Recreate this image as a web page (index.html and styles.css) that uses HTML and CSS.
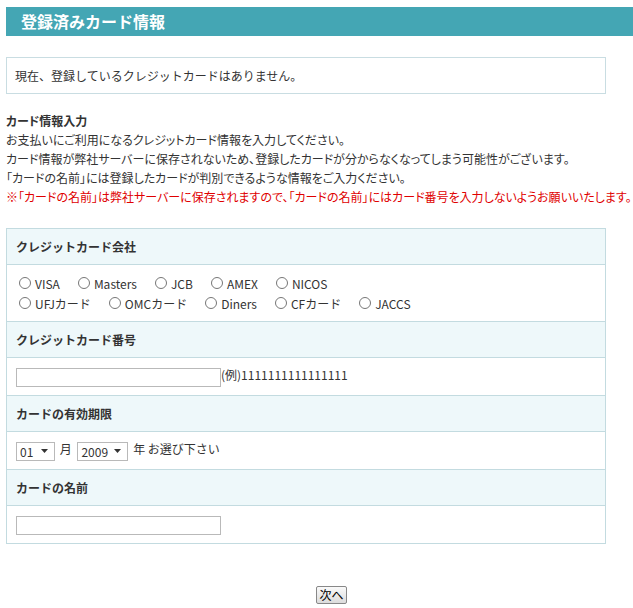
FILE: index.html
```html
<!DOCTYPE html>
<html>
<head>
<meta http-equiv="Content-Type" content="text/html; charset=utf-8"/>
<title>登録済みカード情報</title>
<link rel="stylesheet" href="styles.css">
</head>
<body>
<div class="page">

<h1 class="page-title">登録済みカード情報</h1>

<div class="notice">現在、登録しているクレジットカードはありません。</div>

<div class="guide">
  <h2>カード情報入力</h2>
  <p>お支払いにご利用になるクレジットカード情報を入力してください。</p>
  <p>カード情報が弊社サーバーに保存されないため、登録したカードが分からなくなってしまう可能性がございます。</p>
  <p>「カードの名前」には登録したカードが判別できるような情報をご入力ください。</p>
  <p class="warn">※「カードの名前」は弊社サーバーに保存されますので、「カードの名前」にはカード番号を入力しないようお願いいたします。</p>
</div>

<table class="card-form">
  <tr><th>クレジットカード会社</th></tr>
  <tr>
    <td class="radios">
      <div class="radio-line">
        <label><input type="radio" name="company">VISA</label>
        <label><input type="radio" name="company">Masters</label>
        <label><input type="radio" name="company">JCB</label>
        <label><input type="radio" name="company">AMEX</label>
        <label><input type="radio" name="company">NICOS</label>
      </div>
      <div class="radio-line">
        <label><input type="radio" name="company">UFJカード</label>
        <label><input type="radio" name="company">OMCカード</label>
        <label><input type="radio" name="company">Diners</label>
        <label><input type="radio" name="company">CFカード</label>
        <label><input type="radio" name="company">JACCS</label>
      </div>
    </td>
  </tr>
  <tr><th>クレジットカード番号</th></tr>
  <tr><td><input type="text" class="text-box">(例)1111111111111111</td></tr>
  <tr><th>カードの有効期限</th></tr>
  <tr>
    <td>
      <select class="month"><option>01</option></select>
      <span class="unit">月</span>
      <select class="year"><option>2009</option></select>
      <span class="unit">年 お選び下さい</span>
    </td>
  </tr>
  <tr><th>カードの名前</th></tr>
  <tr><td><input type="text" class="text-box"></td></tr>
</table>

<div class="submit-row"><button type="button">次へ</button></div>

</div>
</body>
</html>
```

FILE: styles.css
```css
body {
  margin: 0;
  font-family: "Noto Sans CJK JP", sans-serif;
  font-size: 12px;
  color: #333;
  background-color: white;
}

.page {
  padding: 7px 0 0 6px;
}

.page-title {
  margin: 0;
  height: 29px;
  line-height: 29px;
  padding-left: 15px;
  background-color: #44a6b4;
  color: white;
  font-size: 16px;
  font-weight: bold;
}

.notice {
  width: 598px;
  margin-top: 21px;
  height: 35px;
  line-height: 35px;
  border: 1px solid #c9dde2;
  text-indent: 8px;
}

.guide {
  margin-top: 17px;
  line-height: 19px;
  font-feature-settings: "palt";
}

.guide h2 {
  margin: 0;
  font-size: 12px;
  font-weight: bold;
}

.guide p {
  margin: 0;
}

.guide .warn {
  color: #e00000;
}

.card-form {
  width: 600px;
  margin-top: 22px;
  border-collapse: collapse;
  border: 1px solid #c3dbe0;
}

.card-form th,
.card-form td {
  border-top: 1px solid #c3dbe0;
  text-align: left;
  padding: 0 9px;
}

.card-form th {
  height: 35px;
  background-color: #eef8fa;
  font-weight: bold;
}

.card-form td {
  height: 37px;
}

.card-form td.radios {
  height: 56px;
}

.radio-line {
  display: flex;
  height: 20px;
  align-items: center;
}

.radio-line label {
  display: flex;
  align-items: center;
  margin-right: 15px;
}

.radio-line input {
  width: 12px;
  height: 12px;
  margin: 0 4px 0 3px;
}

.text-box {
  width: 205px;
  height: 19px;
  box-sizing: border-box;
  border: 1px solid #b9b9b9;
  margin: 0;
  vertical-align: middle;
}

select {
  appearance: none;
  height: 19px;
  padding: 0 0 0 3px;
  font-size: 12px;
  font-family: inherit;
  color: #333;
  vertical-align: middle;
  border: 1px solid #b9b9b9;
  background: white url("data:image/svg+xml;utf8,<svg xmlns='http://www.w3.org/2000/svg' width='7' height='4'><path d='M0 0h7L3.5 4z' fill='%23333'/></svg>") no-repeat right 6px center;
}

.month {
  width: 39px;
}

.year {
  width: 51px;
  margin-left: 3px;
}

.unit {
  margin-left: 2px;
}

.submit-row {
  margin-top: 42px;
  padding-left: 24px;
  text-align: center;
}

.submit-row button {
  font-family: inherit;
  font-size: 12px;
  height: 18px;
  padding: 0 2px;
  line-height: 14px;
  border: 1px solid #888;
  border-radius: 2px;
  background: linear-gradient(#fafafa, #dcdcdc);
}
```
